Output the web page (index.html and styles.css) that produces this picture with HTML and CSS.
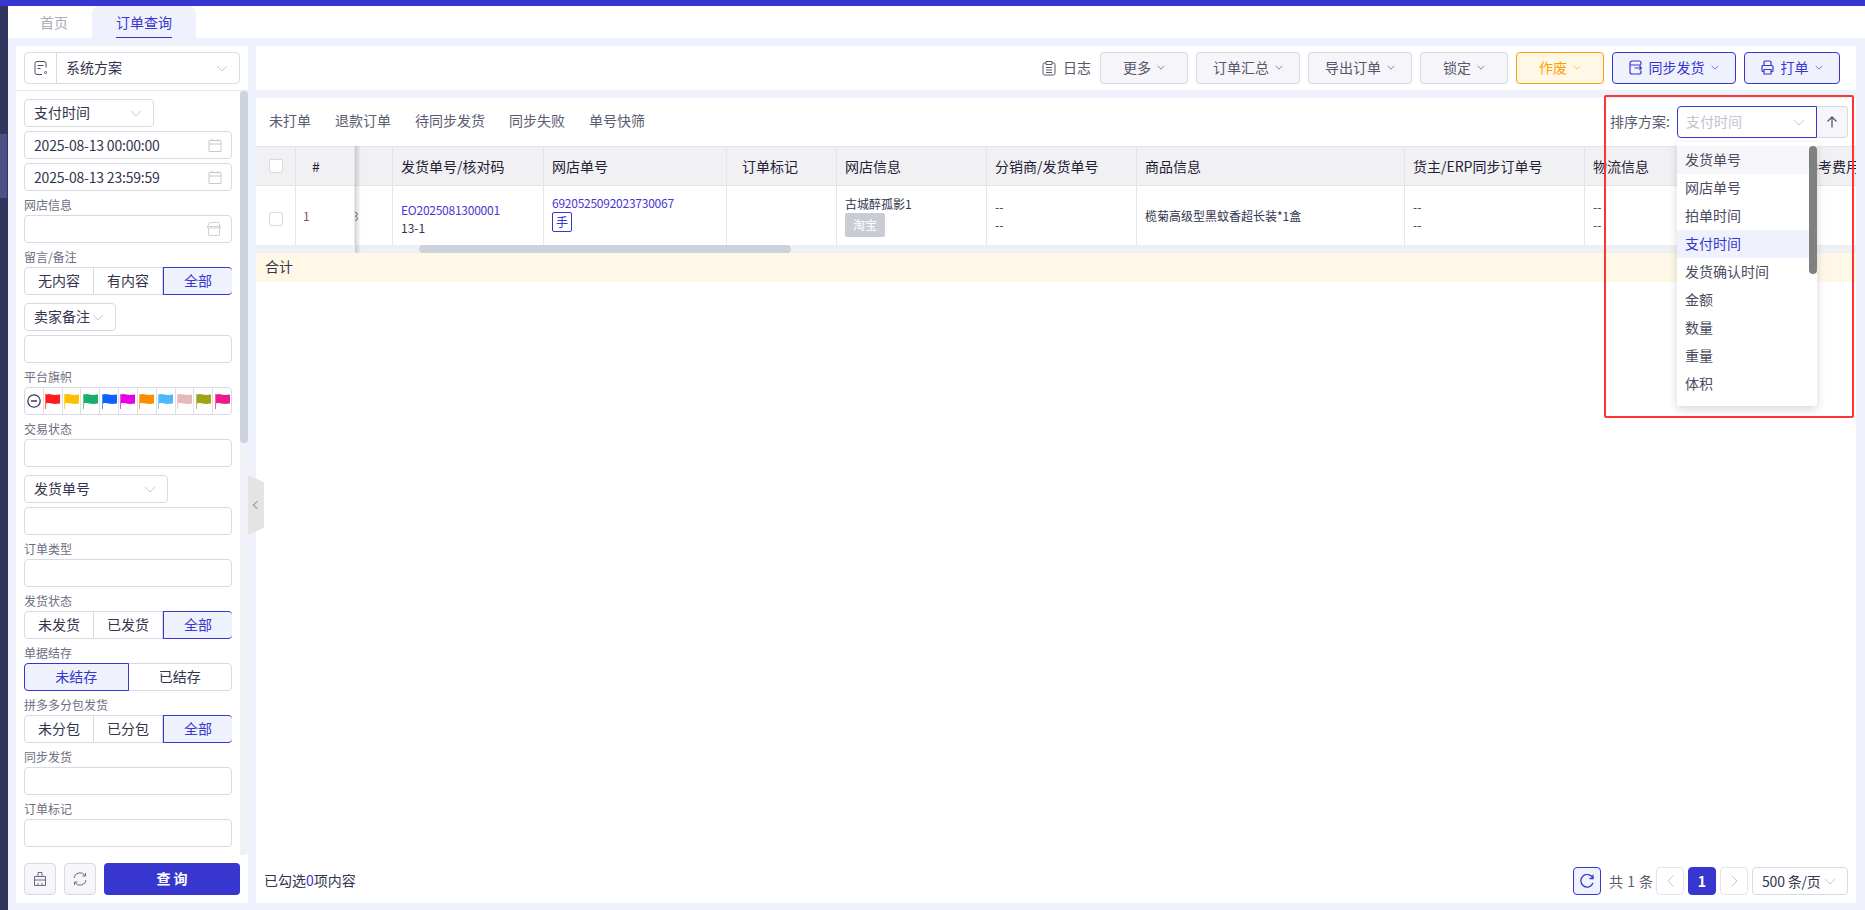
FILE: index.html
```html
<!DOCTYPE html>
<html lang="zh-CN">
<head>
    <meta charset="UTF-8">
    <title>订单查询</title>
    <link rel="stylesheet" href="styles.css">
</head>
<body>
    <svg class="sprite">
        <symbol id="chev" viewBox="0 0 12 7"><path d="M1 1l5 5 5-5" fill="none" stroke="currentColor"/></symbol>
        <symbol id="flag" viewBox="0 0 15 16"><path d="M.5 1v15" stroke="currentColor" stroke-opacity=".7" fill="none"/><path d="M1 1.500c2-.8 3.500-.6 5.500 0s5 .5 8.500 0v9c-3.500.6-6.500.6-8.500 0s-3.500-.7-5.500 0z" fill="currentColor"/></symbol>
    </svg>
    <div class="topline"></div>
    <div class="shell">
        <div class="rail"><div class="rail-item"></div></div>
        <div class="content">
            <div class="tabs">
                <div class="tab">首页</div>
                <div class="tab active"><span>订单查询</span></div>
            </div>
            <div class="work">
                <aside class="side">
                    <div class="side-head">
                        <div class="plan">
                            <div class="plan-icon">
                                <svg width="14" height="14" viewBox="0 0 14 14" fill="none" stroke="#4a4c60"><path d="M12 6.500V2.500a2 2 0 0 0-2-2H3a2 2 0 0 0-2 2v9a2 2 0 0 0 2 2h5"/><path d="M3.500 4.500h6M3.500 7.500h3"/><circle cx="11.500" cy="11.500" r="1"/></svg>
                            </div>
                            <div class="plan-text"><span>系统方案</span><svg class="chev"><use href="#chev"/></svg></div>
                        </div>
                    </div>
                    <div class="side-scroll">
                        <div class="form">
                            <div class="sel w130"><span>支付时间</span><svg class="chev"><use href="#chev"/></svg></div>
                            <div class="inp">2025-08-13 00:00:00
                                <svg class="inp-icon" width="14" height="14" viewBox="0 0 14 14" fill="none" stroke="#c8c9d2"><path d="M1 2.500h12v11H1zM1 6h12M4 .5v3M10 .5v3"/></svg>
                            </div>
                            <div class="inp">2025-08-13 23:59:59
                                <svg class="inp-icon" width="14" height="14" viewBox="0 0 14 14" fill="none" stroke="#c8c9d2"><path d="M1 2.500h12v11H1zM1 6h12M4 .5v3M10 .5v3"/></svg>
                            </div>
                            <label>网店信息</label>
                            <div class="inp">
                                <svg class="inp-icon store" width="14" height="14" viewBox="0 0 14 14" fill="none" stroke="#d0cfd4"><path d="M2.500.5h9l2 4v1.500h-13V4.500zM1.500 6v6a1.500 1.500 0 0 0 1.500 1.500h8a1.500 1.500 0 0 0 1.500-1.500V6M.5 4.500h13"/></svg>
                            </div>
                            <label>留言/备注</label>
                            <div class="seg"><div>无内容</div><div>有内容</div><div class="on">全部</div></div>
                            <div class="sel w92 mt"><span>卖家备注</span><svg class="chev"><use href="#chev"/></svg></div>
                            <div class="inp"></div>
                            <label>平台旗帜</label>
                            <div class="flags">
                                <div><svg width="14" height="14" viewBox="0 0 14 14" fill="none" stroke="#3a3c58" stroke-width="1.300"><circle cx="7" cy="7" r="6.200"/><path d="M4 7h6"/></svg></div>
                                <div class="f-red"><svg><use href="#flag"/></svg></div>
                                <div class="f-yellow"><svg><use href="#flag"/></svg></div>
                                <div class="f-green"><svg><use href="#flag"/></svg></div>
                                <div class="f-blue"><svg><use href="#flag"/></svg></div>
                                <div class="f-magenta"><svg><use href="#flag"/></svg></div>
                                <div class="f-orange"><svg><use href="#flag"/></svg></div>
                                <div class="f-sky"><svg><use href="#flag"/></svg></div>
                                <div class="f-pink"><svg><use href="#flag"/></svg></div>
                                <div class="f-olive"><svg><use href="#flag"/></svg></div>
                                <div class="f-rose"><svg><use href="#flag"/></svg></div>
                            </div>
                            <label>交易状态</label>
                            <div class="inp"></div>
                            <div class="sel w144 mt"><span>发货单号</span><svg class="chev"><use href="#chev"/></svg></div>
                            <div class="inp"></div>
                            <label>订单类型</label>
                            <div class="inp"></div>
                            <label>发货状态</label>
                            <div class="seg"><div>未发货</div><div>已发货</div><div class="on">全部</div></div>
                            <label>单据结存</label>
                            <div class="seg"><div class="on">未结存</div><div>已结存</div></div>
                            <label>拼多多分包发货</label>
                            <div class="seg"><div>未分包</div><div>已分包</div><div class="on">全部</div></div>
                            <label>同步发货</label>
                            <div class="inp"></div>
                            <label>订单标记</label>
                            <div class="inp"></div>
                        </div>
                        <div class="vbar"></div>
                    </div>
                    <div class="side-foot">
                        <button class="btn square">
                            <svg width="14" height="14" viewBox="0 0 14 14" fill="none" stroke="#6a6c80"><path d="M5 .5h4v4H5zM1.500 4.500h11v9h-11zM1.500 8h11M5 11v2.500M9 11v2.500"/></svg>
                        </button>
                        <button class="btn square">
                            <svg width="14" height="14" viewBox="0 0 14 14" fill="none" stroke="#6a6c80"><path d="M1 6a6 6 0 0 1 11-2.500M13 8a6 6 0 0 1-11 2.500"/><path d="M12.500 1v3h-3M1.500 13v-3h3"/></svg>
                        </button>
                        <button class="query">查 询</button>
                    </div>
                </aside>
                <div class="collapse"><i></i></div>
                <main class="main">
                    <div class="toolbar">
                        <div class="log">
                            <svg width="14" height="15" viewBox="0 0 14 15" fill="none" stroke="#55576b"><path d="M4 2H2.500A1.500 1.500 0 0 0 1 3.500v9A1.500 1.500 0 0 0 2.500 14h9a1.500 1.500 0 0 0 1.500-1.500v-9A1.500 1.500 0 0 0 11.500 2H10M4 .5h6v3H4zM4 6.500h6M4 9h6M4 11.500h6"/></svg>
                            <span>日志</span>
                        </div>
                        <button class="btn">更多<svg class="chev-sm"><use href="#chev"/></svg></button>
                        <button class="btn">订单汇总<svg class="chev-sm"><use href="#chev"/></svg></button>
                        <button class="btn">导出订单<svg class="chev-sm"><use href="#chev"/></svg></button>
                        <button class="btn">锁定<svg class="chev-sm"><use href="#chev"/></svg></button>
                        <button class="btn warn">作废<svg class="chev-sm"><use href="#chev"/></svg></button>
                        <button class="btn prim">
                            <svg width="13" height="15" viewBox="0 0 13 15" fill="none" stroke="currentColor" stroke-width="1.200"><path d="M12 4.500V3a2 2 0 0 0-2-2H3a2 2 0 0 0-2 2v9a2 2 0 0 0 2 2h7a2 2 0 0 0 2-2v-1.500M1 5h11M5.500 8h7M10.500 6l2 2-2 2"/></svg>
                            同步发货<svg class="chev-sm"><use href="#chev"/></svg>
                        </button>
                        <button class="btn prim">
                            <svg width="13" height="15" viewBox="0 0 13 15" fill="none" stroke="currentColor" stroke-width="1.200"><path d="M3 5.500V2a1 1 0 0 1 1-1h5a1 1 0 0 1 1 1v3.500M3 11.500H2a1 1 0 0 1-1-1V6.500a1 1 0 0 1 1-1h9a1 1 0 0 1 1 1v4a1 1 0 0 1-1 1h-1M3 9.500h7V14H3z"/></svg>
                            打单<svg class="chev-sm"><use href="#chev"/></svg>
                        </button>
                    </div>
                    <div class="panel">
                        <div class="filter">
                            <div class="quick">
                                <span>未打单</span><span>退款订单</span><span>待同步发货</span><span>同步失败</span><span>单号快筛</span>
                            </div>
                            <div class="sort">
                                <span class="sort-label">排序方案:</span>
                                <div class="sort-sel"><span>支付时间</span><svg class="chev"><use href="#chev"/></svg></div>
                                <div class="sort-dir">
                                    <svg width="12" height="12" viewBox="0 0 12 12" fill="none" stroke="#55576b" stroke-width="1.300"><path d="M6 11.500V1M1.500 5.500L6 1l4.500 4.500"/></svg>
                                </div>
                            </div>
                        </div>
                        <div class="grid">
                            <table>
                                <colgroup>
                                    <col class="c-check"><col class="c-no"><col class="c-cut"><col class="c-eo">
                                    <col class="c-shop-no"><col class="c-mark"><col class="c-shop"><col class="c-dist">
                                    <col class="c-goods"><col class="c-owner"><col class="c-ship"><col class="c-fee">
                                </colgroup>
                                <thead>
                                    <tr>
                                        <th><i class="check"></i></th>
                                        <th class="no">#</th>
                                        <th></th>
                                        <th>发货单号/核对码</th>
                                        <th>网店单号</th>
                                        <th class="mark">订单标记</th>
                                        <th>网店信息</th>
                                        <th>分销商/发货单号</th>
                                        <th>商品信息</th>
                                        <th>货主/ERP同步订单号</th>
                                        <th>物流信息</th>
                                        <th>参考费用</th>
                                    </tr>
                                </thead>
                                <tbody>
                                    <tr>
                                        <td class="down"><i class="check"></i></td>
                                        <td class="idx">1</td>
                                        <td class="cut">3</td>
                                        <td class="down"><a>EO2025081300001</a><br>13-1</td>
                                        <td class="up"><a>6920525092023730067</a><br><span class="hand">手</span></td>
                                        <td></td>
                                        <td>古城醉孤影1<br><span class="plat">淘宝</span></td>
                                        <td>--<br>--</td>
                                        <td>榄菊高级型黑蚊香超长装*1盒</td>
                                        <td>--<br>--</td>
                                        <td>--<br>--</td>
                                        <td></td>
                                    </tr>
                                </tbody>
                            </table>
                            <div class="hbar"><div></div></div>
                            <div class="fix-shadow"></div>
                        </div>
                        <div class="total">合计</div>
                        <div class="fill"></div>
                        <div class="foot">
                            <div class="picked">已勾选<em>0</em>项内容</div>
                            <div class="pager">
                                <div class="pg reload">
                                    <svg width="14" height="14" viewBox="0 0 14 14" fill="none" stroke="currentColor" stroke-width="1.300"><path d="M12.800 4A6.300 6.300 0 1 0 13 9"/><path d="M13 .8V4.500H9.500"/></svg>
                                </div>
                                <span class="count">共 1 条</span>
                                <div class="pg off"><svg width="7" height="12" viewBox="0 0 7 12" fill="none" stroke="currentColor"><path d="M6.500 .5L1 6l5.500 5.500"/></svg></div>
                                <div class="pg cur">1</div>
                                <div class="pg off"><svg width="7" height="12" viewBox="0 0 7 12" fill="none" stroke="currentColor"><path d="M.5 .5L6 6l-5.500 5.500"/></svg></div>
                                <div class="size"><span>500 条/页</span><svg class="chev"><use href="#chev"/></svg></div>
                            </div>
                        </div>
                        <div class="drop">
                            <div class="opt hover">发货单号</div>
                            <div class="opt">网店单号</div>
                            <div class="opt">拍单时间</div>
                            <div class="opt cur">支付时间</div>
                            <div class="opt">发货确认时间</div>
                            <div class="opt">金额</div>
                            <div class="opt">数量</div>
                            <div class="opt">重量</div>
                            <div class="opt">体积</div>
                            <div class="drop-bar"></div>
                        </div>
                        <div class="redbox"></div>
                    </div>
                </main>
            </div>
        </div>
    </div>
</body>
</html>
```

FILE: styles.css
```css
* {
    box-sizing: border-box;
}
html, body {
    margin: 0;
    height: 100%;
    overflow: hidden;
}
body {
    display: flex;
    flex-direction: column;
    font-family: "Noto Sans CJK SC", "Noto Sans", sans-serif;
    font-size: 14px;
    color: #33354d;
    background: #eff1fd;
}
.sprite {
    position: absolute;
    width: 0;
    height: 0;
}
.chev {
    width: 12px;
    height: 7px;
    color: #c6c7d0;
    flex: none;
}
.chev-sm {
    width: 8px;
    height: 5px;
    margin-left: 6px;
    flex: none;
}
.topline {
    height: 6px;
    flex: none;
    background: #3737d0;
}
.shell {
    flex: 1;
    display: flex;
    min-height: 0;
}
.rail {
    width: 8px;
    flex: none;
    background: #31365f;
}
.rail-item {
    width: 7px;
    height: 64px;
    margin-top: 128px;
    background: #4b5185;
}
.content {
    flex: 1;
    display: flex;
    flex-direction: column;
    min-width: 0;
}

/* top tabs */
.tabs {
    height: 32px;
    flex: none;
    display: flex;
    background: #fff;
}
.tab {
    width: 84px;
    padding-left: 32px;
    line-height: 32px;
    color: #a9aab6;
}
.tab.active {
    width: 104px;
    padding-left: 24px;
    border-radius: 8px 8px 0 0;
    background: #eff1fd;
    color: #3737d0;
}
.tab.active span {
    display: block;
    width: 56px;
    height: 32px;
    border-bottom: 1px solid #3737d0;
}
.work {
    flex: 1;
    min-height: 0;
    position: relative;
    display: flex;
    gap: 8px;
    padding: 8px 9px 7px 8px;
}

/* left search column */
.side {
    width: 232px;
    flex: none;
    display: flex;
    flex-direction: column;
    background: #fff;
}
.side-head {
    height: 45px;
    flex: none;
    padding: 6px 8px;
    border-bottom: 1px solid #e8e8ee;
}
.plan {
    display: flex;
    height: 32px;
    border: 1px solid #d9d9e3;
    border-radius: 4px;
}
.plan-icon {
    width: 32px;
    display: flex;
    align-items: center;
    justify-content: center;
    border-right: 1px solid #d9d9e3;
}
.plan-text {
    flex: 1;
    display: flex;
    align-items: center;
    justify-content: space-between;
    padding: 0 11px 0 9px;
}
.plan-text span, .sel span, .sort-sel span {
    margin-bottom: 2px;
}
.side-scroll {
    flex: 1;
    min-height: 0;
    display: flex;
    justify-content: space-between;
    padding-top: 8px;
    padding-left: 8px;
    background: linear-gradient(#fff, #fff) no-repeat 0 0 / 224px 100%, #f0f0f6;
    border-radius: 0 0 4px 0;
    margin-bottom: 8px;
}
.form {
    width: 208px;
    display: flex;
    flex-direction: column;
    gap: 4px;
}
.form label {
    height: 16px;
    line-height: 20px;
    font-size: 12px;
    color: #6c6e82;
}
.sel, .inp {
    height: 28px;
    display: flex;
    align-items: center;
    padding-left: 9px;
    border: 1px solid #d9d9e3;
    border-radius: 4px;
    background: #fff;
}
.sel {
    justify-content: space-between;
    padding-right: 11px;
}
.inp {
    justify-content: space-between;
    padding-right: 9px;
    letter-spacing: -.2px;
}
.inp-icon.store {
    margin-left: auto;
    margin-right: 1px;
}
.w130 {
    width: 130px;
}
.w92 {
    width: 92px;
}
.w144 {
    width: 144px;
}
.mt {
    margin-top: 4px;
}
.seg {
    height: 28px;
    display: flex;
    border: 1px solid #d9d9e3;
    border-radius: 4px;
    background: #fff;
}
.seg div {
    flex: 1;
    margin: -1px 0;
    line-height: 26px;
    text-align: center;
    border-right: 1px solid #d9d9e3;
}
.seg div:last-child {
    border-right: 0;
}
.seg .on {
    margin: -1px -1px -1px 0;
    border: 1px solid #3737d0;
    border-radius: 0 4px 4px 0;
    line-height: 24px;
    background: #eff1fd;
    color: #3737d0;
}
.seg .on:first-child {
    margin: -1px 0 -1px -1px;
    border-radius: 4px 0 0 4px;
}
.flags {
    height: 28px;
    display: flex;
    overflow: hidden;
    border: 1px solid #d9d9e3;
    border-radius: 4px;
}
.flags div {
    flex: 1;
    min-width: 0;
    display: flex;
    align-items: center;
    justify-content: center;
    border-right: 1px solid #dfdfe6;
}
.flags div:last-child {
    border-right: 0;
}
.flags div svg {
    width: 15px;
    height: 16px;
    flex: none;
}
.flags div:first-child svg {
    width: 14px;
    height: 14px;
}
.f-red { color: #ff1c1c; }
.f-yellow { color: #ffc000; }
.f-green { color: #16b06a; }
.f-blue { color: #0a63ff; }
.f-magenta { color: #e600e6; }
.f-orange { color: #ff8c00; }
.f-sky { color: #4db8ff; }
.f-pink { color: #e6b8b8; }
.f-olive { color: #a0a313; }
.f-rose { color: #e91e8c; }
.vbar {
    width: 8px;
    height: 352px;
    margin-top: -8px;
    border-radius: 4px;
    background: #cdd3dc;
}
.side-foot {
    display: flex;
    gap: 8px;
    padding: 0 8px 8px;
}
.btn {
    height: 32px;
    min-width: 88px;
    padding: 0 16px 2px;
    display: flex;
    align-items: center;
    justify-content: center;
    border: 1px solid #d9d9e3;
    border-radius: 4px;
    background: #f6f6fa;
    font: inherit;
    color: #55576b;
}
.btn.square {
    width: 32px;
    min-width: 0;
    padding: 0;
}
.btn.warn {
    border-color: #ff9f0a;
    background: #fff8e6;
    color: #ff9f0a;
}
.btn.prim {
    gap: 6.5px;
    border-color: #3737d0;
    background: #eff1fd;
    color: #3737d0;
}
.btn.prim .chev-sm {
    margin-left: 0;
}
.query {
    width: 136px;
    height: 32px;
    padding: 0 0 3px;
    border: 0;
    border-radius: 4px;
    background: #3737d0;
    color: #fff;
    font: inherit;
    font-weight: bold;
}
.collapse {
    position: absolute;
    left: 240px;
    top: 437px;
    width: 16px;
    height: 60px;
    display: flex;
    align-items: center;
    justify-content: center;
    clip-path: polygon(0 0, 100% 12%, 100% 88%, 0 100%);
    background: #e4e4e4;
    z-index: 2;
}
.collapse i {
    width: 6px;
    height: 6px;
    margin-left: 2px;
    border-left: 1px solid #999;
    border-bottom: 1px solid #999;
    transform: rotate(45deg);
}

/* main */
.main {
    flex: 1;
    min-width: 0;
    display: flex;
    flex-direction: column;
    gap: 8px;
}
.toolbar {
    height: 44px;
    flex: none;
    display: flex;
    align-items: center;
    justify-content: flex-end;
    gap: 8px;
    padding-right: 16px;
    background: #fff;
}
.log {
    display: flex;
    align-items: center;
    gap: 7px;
    margin-right: 1px;
    color: #55576b;
}
.log span {
    margin-bottom: 2px;
}
.panel {
    flex: 1;
    min-height: 0;
    position: relative;
    display: flex;
    flex-direction: column;
    background: #fff;
}
.filter {
    height: 48px;
    flex: none;
    display: flex;
    align-items: center;
    justify-content: space-between;
    padding: 0 8px 0 13px;
}
.quick {
    display: flex;
    gap: 24px;
    margin-bottom: 4px;
    color: #5a5c70;
}
.sort {
    display: flex;
    align-items: center;
}
.sort-label {
    margin: 0 7px 2px 0;
    color: #5a5c70;
}
.sort-sel {
    width: 140px;
    height: 32px;
    display: flex;
    align-items: center;
    justify-content: space-between;
    padding: 0 11px 0 8px;
    border: 1px solid #3737d0;
    border-radius: 4px 0 0 4px;
    color: #c2c3cc;
}
.sort-dir {
    width: 31px;
    height: 32px;
    display: flex;
    align-items: center;
    justify-content: center;
    border: 1px solid #d9d9e3;
    border-left: 0;
    border-radius: 0 4px 4px 0;
    background: #f6f6fa;
}

/* table */
.grid {
    position: relative;
    overflow: hidden;
    flex: none;
}
.grid table {
    width: 1739px;
    table-layout: fixed;
    border-collapse: separate;
    border-spacing: 0;
}
.c-check { width: 40px; }
.c-no { width: 59px; }
.c-cut { width: 38px; }
.c-eo { width: 151px; }
.c-shop-no { width: 183px; }
.c-mark { width: 110px; }
.c-shop { width: 150px; }
.c-dist { width: 150px; }
.c-goods { width: 268px; }
.c-owner { width: 180px; }
.c-ship { width: 211px; }
.c-fee { width: 199px; }
.grid th {
    height: 40px;
    padding: 0 8px;
    font-weight: 400;
    text-align: left;
    color: #1f2135;
    background: #f1f1f4;
    border-top: 1px solid #e5e6ec;
    border-bottom: 1px solid #e5e6ec;
    border-right: 1px solid #e5e6ec;
}
.grid td {
    height: 59px;
    padding: 0 8px;
    font-size: 12px;
    line-height: 18px;
    border-right: 1px solid #e5e6ec;
}
.grid th.no {
    padding-left: 16px;
}
.grid th.mark {
    padding-left: 15px;
}
.grid td.idx {
    padding-left: 7px;
    color: #7a5a50;
}
.grid td.cut {
    padding: 0;
    text-indent: -3px;
    overflow: hidden;
    color: #8a8a96;
}
.grid td.down {
    padding-top: 6px;
}
.grid td.up {
    padding-bottom: 6px;
}
.grid a {
    letter-spacing: -.25px;
    color: #4a36d0;
}
.check {
    display: block;
    width: 14px;
    height: 14px;
    margin-left: 5px;
    border: 1px solid #d9d9e3;
    border-radius: 2px;
    background: #fff;
}
.hand {
    display: inline-block;
    width: 20px;
    height: 20px;
    border: 1px solid #3737d0;
    border-radius: 2px;
    text-align: center;
    color: #3737d0;
    vertical-align: top;
}
.plat {
    display: inline-block;
    width: 40px;
    height: 24px;
    border-radius: 2px;
    line-height: 24px;
    text-align: center;
    vertical-align: top;
    color: #fff;
    background: #c9cbd5;
}
.hbar {
    height: 8px;
    background: #eff0f4;
}
.hbar div {
    width: 372px;
    height: 8px;
    margin-left: 163px;
    border-radius: 4px;
    background: #cdd3dc;
}
.fix-shadow {
    position: absolute;
    left: 99px;
    top: 0;
    bottom: 0;
    width: 6px;
    background: linear-gradient(to right, rgba(0, 0, 0, .16), rgba(0, 0, 0, 0));
}
.total {
    height: 29px;
    flex: none;
    padding-left: 9px;
    line-height: 26px;
    background: #fff8e6;
}
.fill {
    flex: 1;
}
.foot {
    display: flex;
    align-items: center;
    justify-content: space-between;
    padding: 0 8px 8px;
}
.picked {
    margin-bottom: 3px;
}
.picked em {
    font-style: normal;
    color: #3737d0;
}
.pager {
    display: flex;
    align-items: center;
    gap: 4px;
}
.pg {
    width: 28px;
    height: 28px;
    display: flex;
    align-items: center;
    justify-content: center;
    border: 1px solid #e4e4ec;
    border-radius: 4px;
}
.pg.reload {
    border-color: #3737d0;
    background: #eff1fd;
    color: #3737d0;
}
.pg.off {
    color: #c6c7d0;
}
.pg.cur {
    border-color: #3737d0;
    background: #3737d0;
    color: #fff;
    font-weight: bold;
}
.count {
    width: 43px;
    margin-left: 4px;
    word-spacing: 1px;
    white-space: nowrap;
    color: #5a5c70;
}
.size {
    width: 96px;
    height: 28px;
    display: flex;
    align-items: center;
    justify-content: space-between;
    padding: 0 11px 0 9px;
    border: 1px solid #d9d9e3;
    border-radius: 4px;
    letter-spacing: -.2px;
}

/* dropdown + annotation box */
.drop {
    position: absolute;
    left: 1421px;
    top: 44px;
    width: 140px;
    height: 264px;
    padding-top: 4px;
    border-radius: 2px;
    background: #fff;
    box-shadow: 0 3px 10px rgba(0, 0, 0, .16);
    z-index: 3;
}
.opt {
    height: 28px;
    padding-left: 8px;
    line-height: 26px;
    color: #4a4c60;
}
.opt.hover {
    background: #f6f6fa;
}
.opt.cur {
    background: #eff1fd;
    color: #3737d0;
}
.drop-bar {
    position: absolute;
    right: 0;
    top: 4px;
    width: 8px;
    height: 128px;
    border-radius: 4px;
    background: #808080;
}
.redbox {
    position: absolute;
    left: 1348px;
    top: -3px;
    width: 250px;
    height: 323px;
    border: 2px solid #ff3333;
    border-radius: 2px;
    z-index: 4;
}
```
